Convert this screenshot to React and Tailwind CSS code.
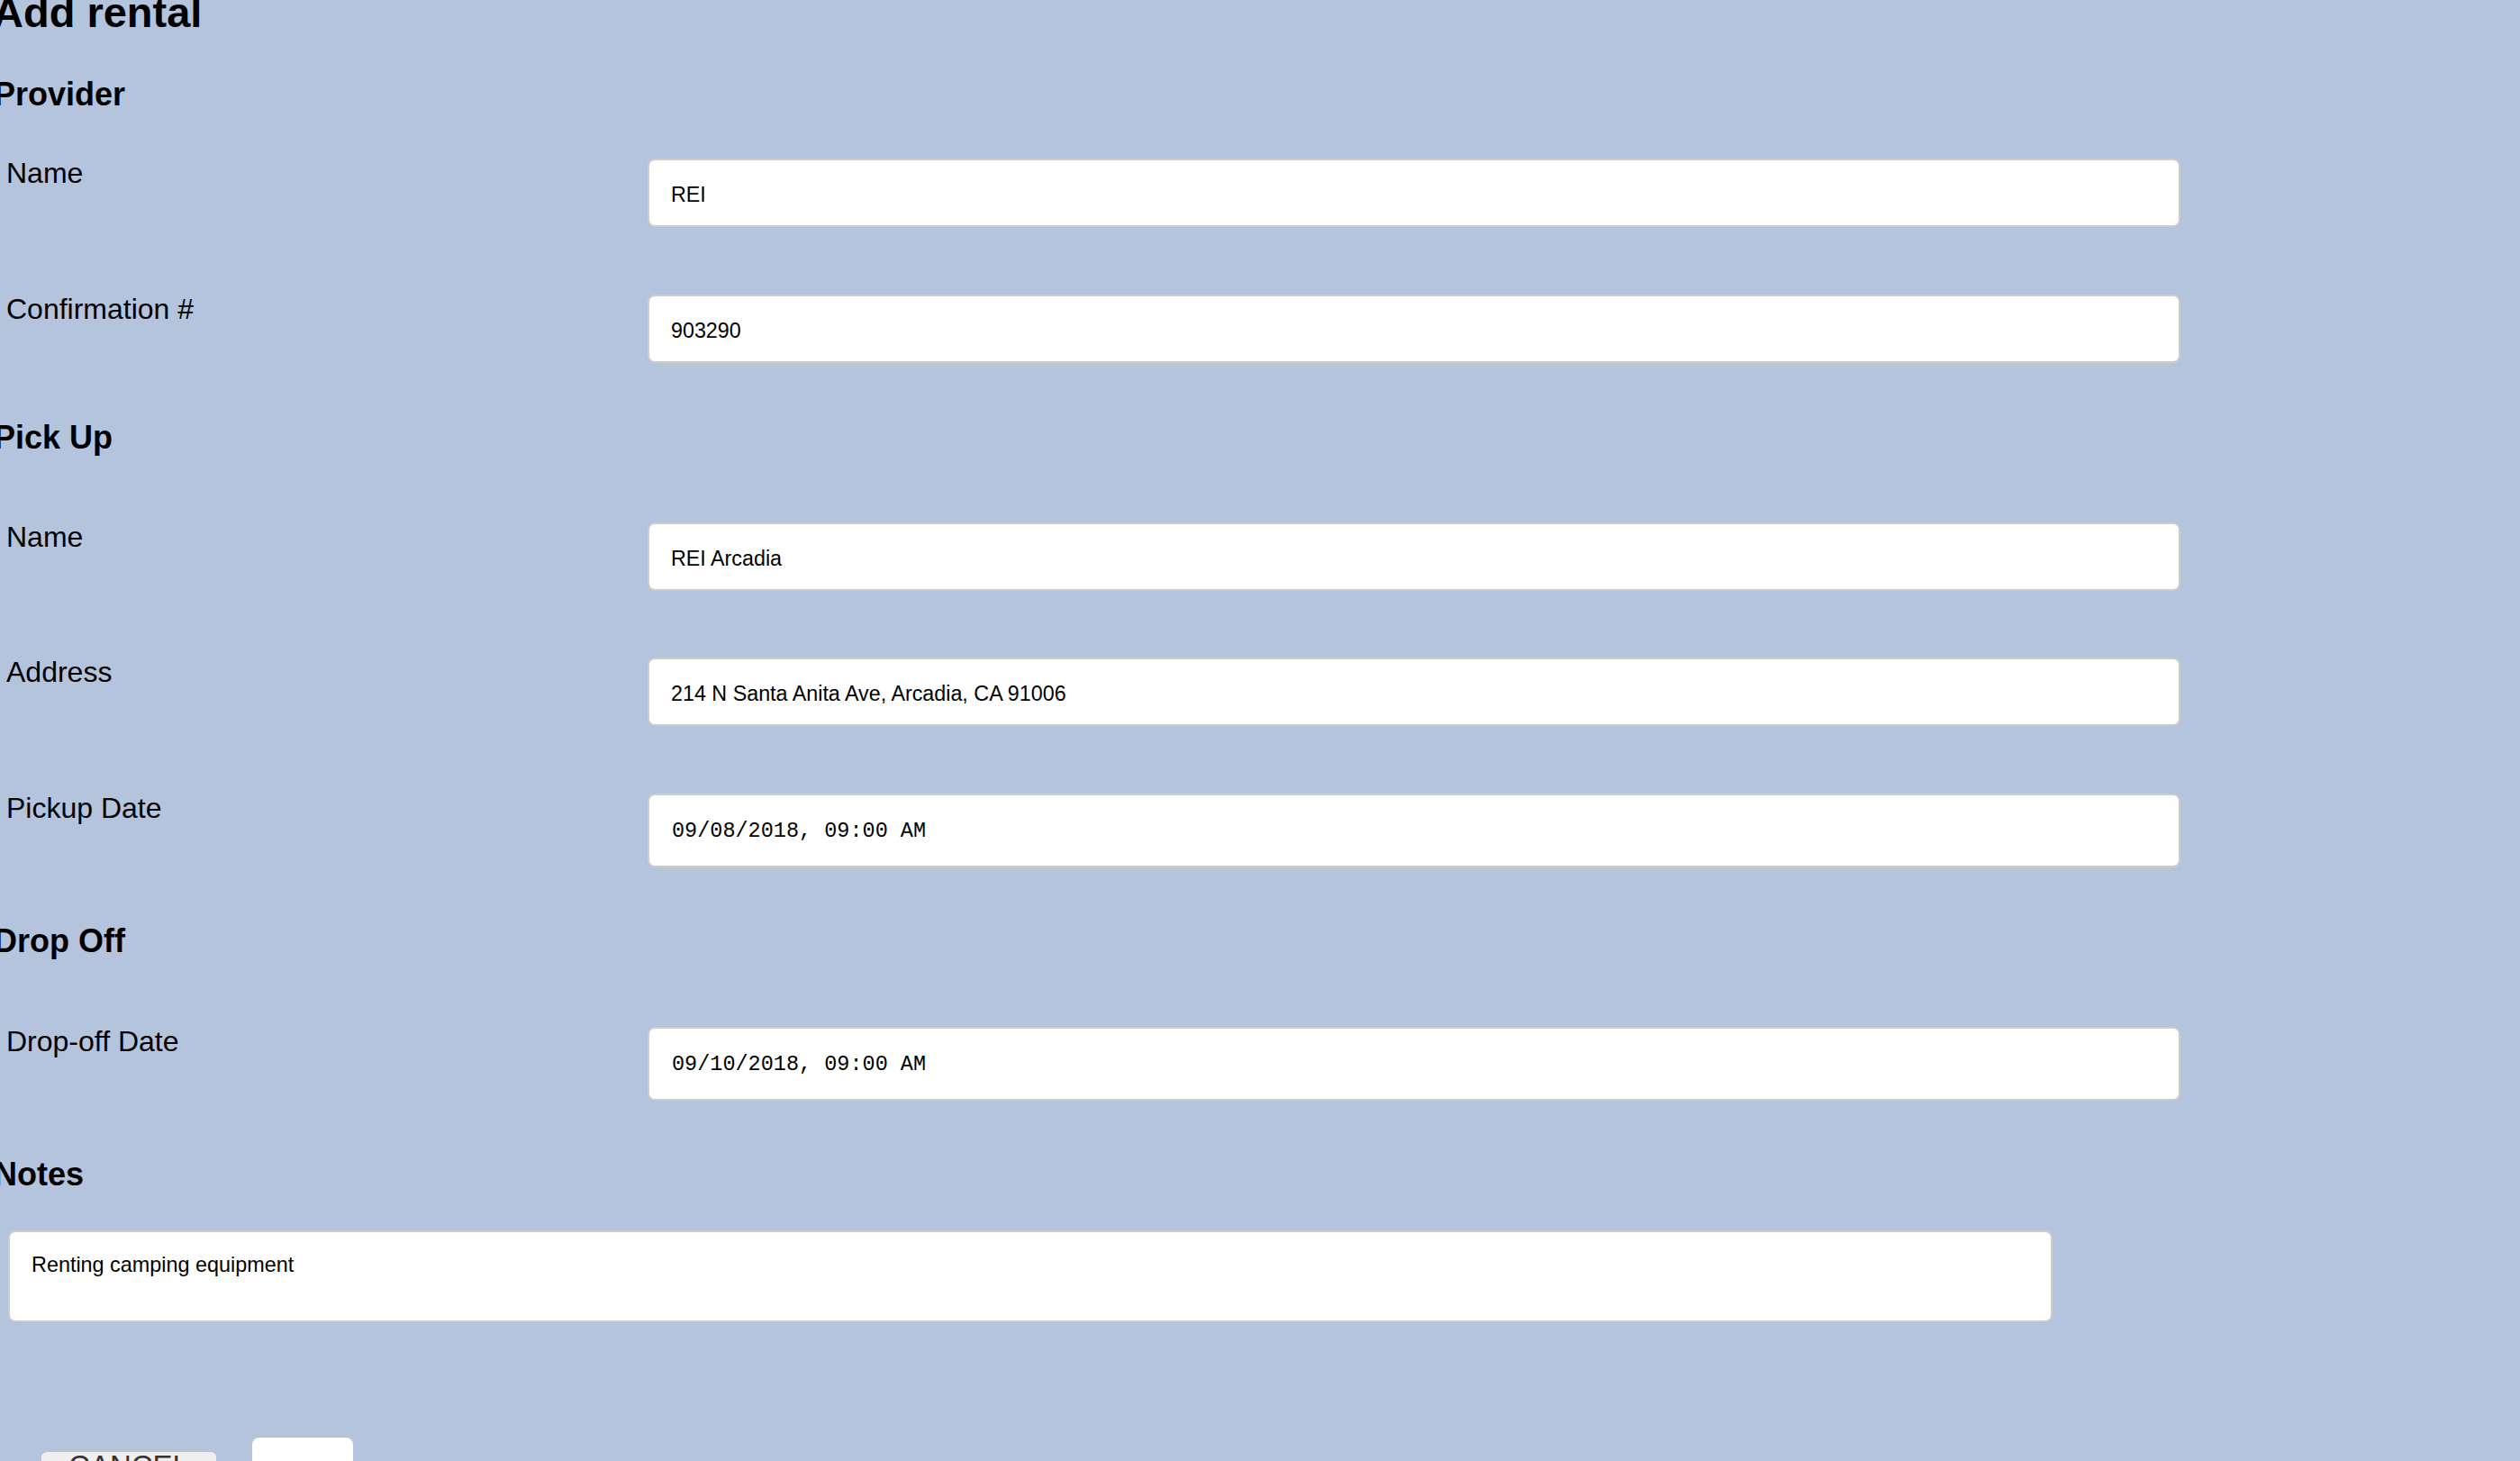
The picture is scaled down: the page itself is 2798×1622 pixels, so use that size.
import { useState } from "react";

const PROVIDER = [
  { key: "providerName", label: "Name", value: "REI" },
  { key: "confirmation", label: "Confirmation #", value: "903290" },
];

const PICKUP = [
  { key: "pickupName", label: "Name", value: "REI Arcadia" },
  { key: "address", label: "Address", value: "214 N Santa Anita Ave, Arcadia, CA 91006" },
  { key: "pickupDate", label: "Pickup Date", value: "09/08/2018, 09:00 AM", date: true },
];

const DROPOFF = [
  { key: "dropoffDate", label: "Drop-off Date", value: "09/10/2018, 09:00 AM", date: true },
];

function Field({ label, value, date, onChange, className = "" }) {
  return (
    <div className={`flex items-start pl-[7px] ${className}`}>
      <label className="w-[712px] shrink-0 text-[32px] leading-[32px] text-black">{label}</label>
      <input
        type="text"
        value={value}
        onChange={onChange}
        className={`w-[1702px] rounded-lg border-2 border-[#cccccc] bg-white text-black outline-none ${
          date
            ? "h-[82px] px-[25px] text-[23.5px] font-['Liberation_Mono',monospace]"
            : "h-[76px] px-[24px] pt-[4px] text-[23.3px] font-['Liberation_Sans',Arial,sans-serif]"
        }`}
      />
    </div>
  );
}

function Heading({ children, className = "" }) {
  return (
    <h3 className={`ml-[-7px] text-[36px] leading-[36px] font-bold text-black ${className}`}>{children}</h3>
  );
}

export default function App() {
  const [form, setForm] = useState(() => {
    const init = {};
    [...PROVIDER, ...PICKUP, ...DROPOFF].forEach((f) => (init[f.key] = f.value));
    init.notes = "Renting camping equipment";
    return init;
  });

  const update = (key) => (e) => setForm({ ...form, [key]: e.target.value });

  return (
    <div className="h-[1622px] overflow-hidden bg-[#b4c4dd] font-['Liberation_Sans',Arial,sans-serif] text-black">
      <h2 className="ml-[-8px] mt-[-10px] text-[47px] leading-[48px] font-bold">Add rental</h2>

      <Heading className="mt-[49px]">Provider</Heading>
      <Field {...PROVIDER[0]} value={form.providerName} onChange={update("providerName")} className="mt-[53px]" />
      <Field {...PROVIDER[1]} value={form.confirmation} onChange={update("confirmation")} className="mt-[75px]" />

      <Heading className="mt-[65px]">Pick Up</Heading>
      <Field {...PICKUP[0]} value={form.pickupName} onChange={update("pickupName")} className="mt-[76px]" />
      <Field {...PICKUP[1]} value={form.address} onChange={update("address")} className="mt-[74px]" />
      <Field {...PICKUP[2]} value={form.pickupDate} onChange={update("pickupDate")} className="mt-[75px]" />

      <Heading className="mt-[64px]">Drop Off</Heading>
      <Field {...DROPOFF[0]} value={form.dropoffDate} onChange={update("dropoffDate")} className="mt-[77px]" />

      <Heading className="mt-[64px]">Notes</Heading>
      <div className="mt-[44px] pl-[9px]">
        <textarea
          value={form.notes}
          onChange={update("notes")}
          className="block h-[102px] w-[2270px] resize-none rounded-lg border-2 border-[#cccccc] bg-white px-[24px] pt-[19px] text-[23.4px] text-black outline-none"
        />
      </div>

      <div className="mt-[128px] flex items-start gap-[40px] pl-[46px]">
        <button
          type="button"
          className="mt-[16px] flex h-[60px] w-[194px] items-start justify-center rounded-md bg-[#efefef] pt-[4px] text-[33px] leading-[24px] text-[#333]"
        >
          CANCEL
        </button>
        <button
          type="button"
          className="flex h-[90px] w-[112px] items-end justify-center rounded-lg bg-white pb-[10px] text-[30px] text-[#333]"
        >
          SAVE
        </button>
      </div>
    </div>
  );
}
